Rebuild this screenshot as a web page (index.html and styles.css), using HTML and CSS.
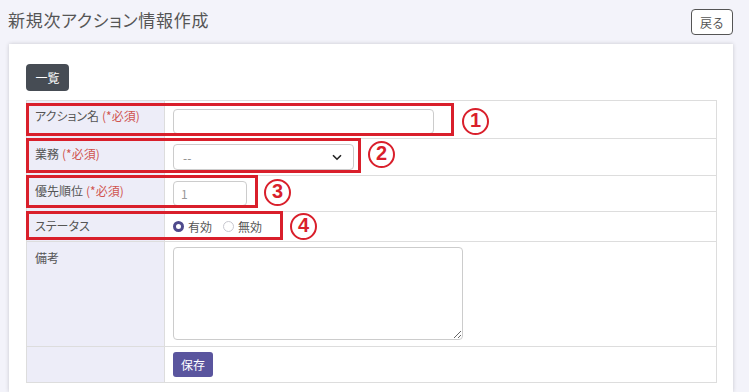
FILE: index.html
```html
<!DOCTYPE html>
<html lang="ja">
<head>
<meta charset="utf-8">
<title>新規次アクション情報作成</title>
<link rel="stylesheet" href="styles.css">
</head>
<body>
<header class="header">
  <h1 class="title">新規次アクション情報作成</h1>
  <button class="btn-back" type="button">戻る</button>
</header>
<main class="card">
  <button class="btn-list" type="button">一覧</button>
  <div class="table-wrap">
    <div class="form">
      <div class="row r1">
        <div class="label">アクション名<span class="req">(*必須)</span></div>
        <div class="value"><input class="text-input" type="text"></div>
      </div>
      <div class="row r2">
        <div class="label">業務<span class="req">(*必須)</span></div>
        <div class="value">
          <div class="select"><span>--</span>
            <svg width="10" height="7" viewBox="0 0 10 7"><path d="M1 1.2 L5 5.2 L9 1.2" fill="none" stroke="#222" stroke-width="1.6"/></svg>
          </div>
        </div>
      </div>
      <div class="row r3">
        <div class="label">優先順位<span class="req">(*必須)</span></div>
        <div class="value"><input class="num-input" type="text" value="1"></div>
      </div>
      <div class="row r4">
        <div class="label">ステータス</div>
        <div class="value radios">
          <label class="radio"><input type="radio" name="st" checked><span>有効</span></label>
          <label class="radio"><input type="radio" name="st"><span>無効</span></label>
        </div>
      </div>
      <div class="row r5">
        <div class="label top">備考</div>
        <div class="value"><textarea class="memo"></textarea></div>
      </div>
      <div class="row r6">
        <div class="label"></div>
        <div class="value"><button class="btn-save" type="button">保存</button></div>
      </div>
    </div>
    <div class="mark m1"></div>
    <div class="mark m2"></div>
    <div class="mark m3"></div>
    <div class="mark m4"></div>
    <div class="num n1">1</div>
    <div class="num n2">2</div>
    <div class="num n3">3</div>
    <div class="num n4">4</div>
  </div>
</main>
</body>
</html>
```

FILE: styles.css
```css
* { box-sizing: border-box; }
html, body { height: 100%; }
body {
  margin: 0;
  background: #f3f3fa;
  font-family: "Noto Sans CJK JP", "Noto Sans", sans-serif;
  font-feature-settings: "palt";
  color: #555;
  overflow: hidden;
}
.header {
  display: flex;
  justify-content: space-between;
  align-items: flex-start;
  height: 44px;
  padding: 0 16px 0 8px;
}
.title {
  margin: 8px 0 0;
  font-size: 17px;
  letter-spacing: 0.7px;
  font-weight: normal;
  line-height: 24px;
  color: #555;
}
.btn-back {
  margin-top: 9px;
  width: 42px;
  height: 26px;
  padding: 0;
  border: 1px solid #555;
  border-radius: 4px;
  background: #fff;
  color: #555;
  font-family: inherit;
  font-size: 12px;
}
.card {
  margin: 0 16px 0 9px;
  background: #fff;
  box-shadow: 0 0 4px rgba(0,0,0,0.18);
  padding: 20px 16px 0 17px;
  height: calc(100vh - 44px);
  overflow: hidden;
}
.btn-list {
  display: block;
  width: 43px;
  height: 27px;
  padding: 0;
  border: none;
  border-radius: 4px;
  background: #464c54;
  color: #fff;
  font-family: inherit;
  font-size: 12px;
  margin-bottom: 9px;
}
.table-wrap { position: relative; }
.form {
  border: 1px solid #ddd;
  border-bottom: none;
}
.row {
  display: grid;
  grid-template-columns: 138px 1fr;
  border-bottom: 1px solid #ddd;
}
.r1 { height: 38px; }
.r2 { height: 37px; }
.r3 { height: 36px; }
.r4 { height: 30px; }
.r5 { height: 105px; }
.r6 { height: 36px; }
.label {
  background: #ededf8;
  border-right: 1px solid #ddd;
  padding: 7px 8px 0;
  font-size: 12px;
  line-height: 16px;
  color: #555;
}
.r4 .label { padding-top: 6px; }
.label.top { padding-top: 8px; }
.req { color: #d0544f; margin-left: 3px; }
.value {
  display: flex;
  align-items: center;
  padding-left: 8px;
}
.r5 .value { align-items: flex-start; padding-top: 5px; }
.text-input {
  width: 261px;
  height: 25px;
  margin-top: 3px;
  border: 1px solid #ccc;
  border-radius: 4px;
}
.select {
  width: 181px;
  height: 26px;
  border: 1px solid #ccc;
  border-radius: 4px;
  display: flex;
  align-items: center;
  justify-content: space-between;
  padding: 0 11px 0 9px;
  font-size: 12px;
  color: #888;
}
.num-input {
  width: 74px;
  height: 25px;
  border: 1px solid #ccc;
  border-radius: 4px;
  padding: 0 7px;
  font-family: inherit;
  font-size: 12px;
  color: #999;
}
.radios { gap: 11px; }
.radio {
  display: flex;
  align-items: center;
  gap: 4px;
  font-size: 12px;
  color: #555;
}
.radio input {
  appearance: none;
  -webkit-appearance: none;
  margin: 0;
  width: 11px;
  height: 11px;
  border-radius: 50%;
  border: 1px solid #c8c8d0;
  background: #fff;
}
.radio input:checked {
  border: 3.5px solid #4f4a8c;
}
.memo {
  width: 290px;
  height: 93px;
  border: 1px solid #ccc;
  border-radius: 4px;
  resize: both;
  margin: 0;
}
.btn-save {
  width: 40px;
  height: 25px;
  padding: 0;
  border: none;
  border-radius: 3px;
  background: #5a559e;
  color: #fff;
  font-family: inherit;
  font-size: 12px;
}
.mark {
  position: absolute;
  left: 0;
  border: 3px solid #d91f2b;
}
.m1 { top: 3px; width: 428px; height: 33px; }
.m2 { top: 38px; width: 335px; height: 35px; }
.m3 { top: 75px; width: 232px; height: 33px; }
.m4 { top: 111px; width: 257px; height: 29px; }
.num {
  position: absolute;
  width: 27px;
  height: 27px;
  border: 2.8px solid #d91f2b;
  border-radius: 50%;
  color: #d91f2b;
  font-family: "Liberation Sans", Arial, sans-serif;
  font-weight: bold;
  font-size: 20px;
  line-height: 21px;
  text-align: center;
}
.n1 { left: 436px; top: 8px; }
.n2 { left: 342px; top: 41px; }
.n3 { left: 238px; top: 79px; }
.n4 { left: 264px; top: 113px; }
```
